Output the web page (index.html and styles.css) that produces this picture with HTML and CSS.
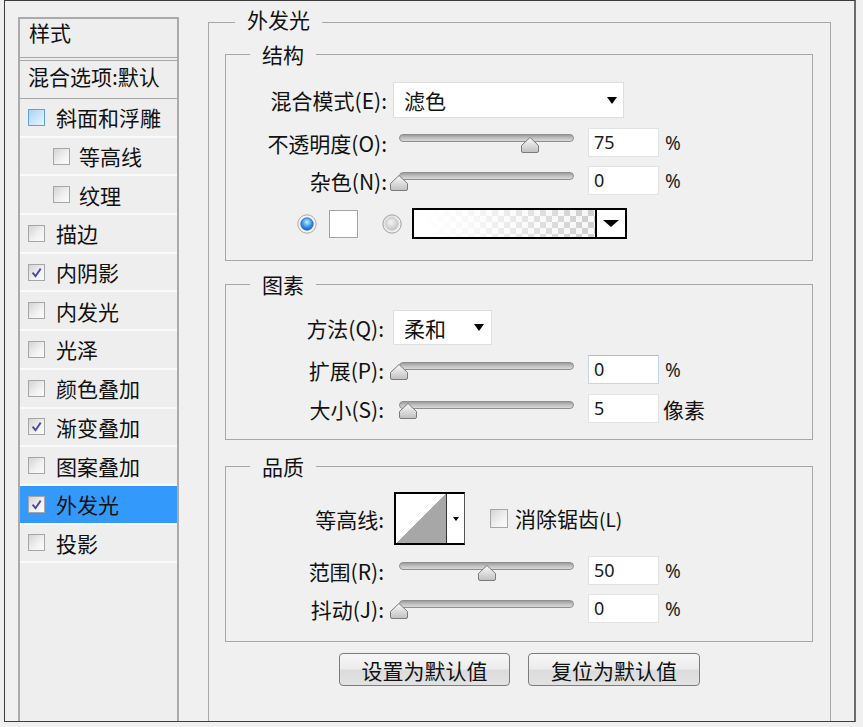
FILE: index.html
```html
<!DOCTYPE html>
<html lang="zh-CN">
<head>
<meta charset="utf-8">
<title>图层样式 - 外发光</title>
<link rel="stylesheet" href="styles.css">
</head>
<body>
<div class="frame">
  <div class="style-list">
    <div class="list-head">样式</div>
    <div class="list-blend">混合选项:默认</div>
    <div class="item"><span class="cb cb-hover"></span>斜面和浮雕</div>
    <div class="item sub"><span class="cb"></span>等高线</div>
    <div class="item sub"><span class="cb"></span>纹理</div>
    <div class="item"><span class="cb"></span>描边</div>
    <div class="item"><span class="cb"><svg viewBox="0 0 15 15" width="15" height="15"><path d="M3.6 7.6l2.9 3.6 5.2-7.6" fill="none" stroke="#4a4aa6" stroke-width="1.9"/></svg></span>内阴影</div>
    <div class="item"><span class="cb"></span>内发光</div>
    <div class="item"><span class="cb"></span>光泽</div>
    <div class="item"><span class="cb"></span>颜色叠加</div>
    <div class="item"><span class="cb"><svg viewBox="0 0 15 15" width="15" height="15"><path d="M3.6 7.6l2.9 3.6 5.2-7.6" fill="none" stroke="#4a4aa6" stroke-width="1.9"/></svg></span>渐变叠加</div>
    <div class="item"><span class="cb"></span>图案叠加</div>
    <div class="item active"><span class="cb"><svg viewBox="0 0 15 15" width="15" height="15"><path d="M3.6 7.6l2.9 3.6 5.2-7.6" fill="none" stroke="#4a4aa6" stroke-width="1.9"/></svg></span>外发光</div>
    <div class="item"><span class="cb"></span>投影</div>
  </div>

  <fieldset class="panel">
    <legend class="panel-title">外发光</legend>

    <fieldset class="group g-structure">
      <legend>结构</legend>
      <div class="row r-blend">
        <span class="label">混合模式(E):</span>
        <div class="select select-blend"><span>滤色</span><i class="caret"></i></div>
      </div>
      <div class="row r-opacity">
        <span class="label">不透明度(O):</span>
        <div class="slider"><div class="track"></div><svg class="thumb" style="left:75%" viewBox="0 0 20 17" width="20" height="17"><path d="M1.5 15V9.5L10 1.5l8.5 8V15q0 1.5-1.5 1.5H3Q1.5 16.5 1.5 15Z"/></svg></div>
        <div class="num">75</div><span class="unit">%</span>
      </div>
      <div class="row r-noise">
        <span class="label">杂色(N):</span>
        <div class="slider"><div class="track"></div><svg class="thumb" style="left:0%" viewBox="0 0 20 17" width="20" height="17"><path d="M1.5 15V9.5L10 1.5l8.5 8V15q0 1.5-1.5 1.5H3Q1.5 16.5 1.5 15Z"/></svg></div>
        <div class="num">0</div><span class="unit">%</span>
      </div>
      <div class="row r-color">
        <svg class="radio" viewBox="0 0 20 20" width="20" height="20"><circle cx="10" cy="10" r="9.2" fill="#f3f3f3" stroke="#a8a8a8"/><circle cx="10" cy="10" r="6.2" fill="url(#radioBlue)" stroke="#2766b0" stroke-width=".8"/></svg>
        <div class="swatch"></div>
        <svg class="radio radio-off" viewBox="0 0 20 20" width="20" height="20"><circle cx="10" cy="10" r="9.2" fill="url(#radioGray)" stroke="#a2a2a2"/><circle cx="10" cy="10" r="6.2" fill="url(#radioGrayIn)" stroke="#c4c4c4" stroke-width=".8"/></svg>
        <div class="gradient"><div class="grad-fill"></div><div class="grad-arrow"><i class="caret caret-big"></i></div></div>
      </div>
    </fieldset>

    <fieldset class="group g-elements">
      <legend>图素</legend>
      <div class="row r-method">
        <span class="label">方法(Q):</span>
        <div class="select select-method"><span>柔和</span><i class="caret"></i></div>
      </div>
      <div class="row r-spread">
        <span class="label">扩展(P):</span>
        <div class="slider"><div class="track"></div><svg class="thumb" style="left:0%" viewBox="0 0 20 17" width="20" height="17"><path d="M1.5 15V9.5L10 1.5l8.5 8V15q0 1.5-1.5 1.5H3Q1.5 16.5 1.5 15Z"/></svg></div>
        <div class="num num-focus">0</div><span class="unit">%</span>
      </div>
      <div class="row r-size">
        <span class="label">大小(S):</span>
        <div class="slider"><div class="track"></div><svg class="thumb" style="left:5%" viewBox="0 0 20 17" width="20" height="17"><path d="M1.5 15V9.5L10 1.5l8.5 8V15q0 1.5-1.5 1.5H3Q1.5 16.5 1.5 15Z"/></svg></div>
        <div class="num">5</div><span class="unit unit-px">像素</span>
      </div>
    </fieldset>

    <fieldset class="group g-quality">
      <legend>品质</legend>
      <div class="row r-contour">
        <span class="label">等高线:</span>
        <div class="contour"><div class="contour-preview"></div><div class="contour-arrow"><i class="caret caret-small"></i></div></div>
        <span class="cb cb-large"></span><span class="aa-label">消除锯齿<span class="key">(L)</span></span>
      </div>
      <div class="row r-range">
        <span class="label">范围(R):</span>
        <div class="slider"><div class="track"></div><svg class="thumb" style="left:50%" viewBox="0 0 20 17" width="20" height="17"><path d="M1.5 15V9.5L10 1.5l8.5 8V15q0 1.5-1.5 1.5H3Q1.5 16.5 1.5 15Z"/></svg></div>
        <div class="num">50</div><span class="unit">%</span>
      </div>
      <div class="row r-jitter">
        <span class="label">抖动(J):</span>
        <div class="slider"><div class="track"></div><svg class="thumb" style="left:0%" viewBox="0 0 20 17" width="20" height="17"><path d="M1.5 15V9.5L10 1.5l8.5 8V15q0 1.5-1.5 1.5H3Q1.5 16.5 1.5 15Z"/></svg></div>
        <div class="num">0</div><span class="unit">%</span>
      </div>
    </fieldset>

    <div class="buttons">
      <button class="btn btn-set">设置为默认值</button>
      <button class="btn btn-reset">复位为默认值</button>
    </div>
  </fieldset>
</div>

<svg class="defs" width="0" height="0" aria-hidden="true">
  <defs>
    <linearGradient id="thumbGrad" x1="0" y1="0" x2="0" y2="1">
      <stop offset="0" stop-color="#fbfbfb"/>
      <stop offset="1" stop-color="#c0c0c0"/>
    </linearGradient>
    <radialGradient id="radioBlue" cx="50%" cy="35%" r="65%">
      <stop offset="0" stop-color="#c8ecff"/>
      <stop offset=".55" stop-color="#3e9cf0"/>
      <stop offset="1" stop-color="#1b5aa8"/>
    </radialGradient>
    <linearGradient id="radioGray" x1="0" y1="0" x2="1" y2="1">
      <stop offset="0" stop-color="#dcdcdc"/>
      <stop offset="1" stop-color="#f7f7f7"/>
    </linearGradient>
    <radialGradient id="radioGrayIn" cx="40%" cy="35%" r="70%">
      <stop offset="0" stop-color="#f4f4f4"/>
      <stop offset="1" stop-color="#c2c2c2"/>
    </radialGradient>
  </defs>
</svg>
</body>
</html>
```

FILE: styles.css
```css
* {
  box-sizing: border-box;
}

body {
  margin: 0;
  background: #f0f0f0;
  font-family: "Noto Sans CJK SC", "Noto Sans", sans-serif;
  font-size: 21px;
  color: #111;
}

.frame {
  margin-left: 4px;
  width: 852px;
  height: 722px;
  border: 1px solid #3d3d3d;
  border-right: 2px solid #6b6b6b;
  background: #f0f0f0;
  display: flex;
  align-items: flex-start;
  overflow: hidden;
}

/* ---------- left style list ---------- */
.style-list {
  flex: none;
  margin: 16px 0 0 13px;
  width: 161px;
  height: 760px;
  border: 2px solid #ababab;
  border-bottom: none;
  background: #eeeeee;
}

.list-head {
  height: 39px;
  padding: 1px 0 0 9px;
  line-height: 24px;
  border-bottom: 1px solid #a6a6a6;
}

.list-blend {
  margin-top: 2px;
  height: 39px;
  padding: 3px 0 0 8px;
  line-height: 24px;
  border-top: 1px solid #a6a6a6;
  border-bottom: 1px solid #a6a6a6;
  white-space: nowrap;
}

.item {
  height: 38.7px;
  display: flex;
  align-items: center;
  line-height: 24px;
  border-bottom: 2px solid #fafafa;
  white-space: nowrap;
}

.item.active {
  background: #3399fb;
}

.cb {
  flex: none;
  width: 17px;
  height: 17px;
  border: 1px solid #a6a6a6;
  background: linear-gradient(135deg, #d4d4d4 0%, #f2f2f2 60%, #fbfbfb 100%);
  display: inline-flex;
  align-items: center;
  justify-content: center;
  margin: 0 11px 0 8px;
}

.item.sub .cb {
  margin-left: 33px;
  margin-right: 9px;
}

.cb-hover {
  border-color: #5ea2dc;
  background: linear-gradient(135deg, #a9d5f6 0%, #cfe8fb 60%, #e4f3fe 100%);
}

.cb svg {
  display: block;
}

/* ---------- main panel ---------- */
fieldset {
  margin: 0;
  padding: 0;
  min-width: 0;
  border: 1px solid #a7a7a7;
}

legend {
  padding: 0 12px;
  font-size: 21px;
  line-height: 24px;
  color: #111;
}

.panel {
  flex: none;
  margin: 6px 0 0 29px;
  width: 623px;
  height: 800px;
  padding: 0 16px;
}

.panel-title {
  margin-left: 10px;
  padding-bottom: 6px;
}

.group {
  width: 588px;
}

.group legend {
  margin-left: 24px;
}

.g-structure {
  margin-top: 5px;
  padding-bottom: 21px;
}

.g-elements {
  margin-top: 11px;
  padding-bottom: 16px;
}

.g-quality {
  margin-top: 14px;
  padding-bottom: 18px;
}

.row {
  display: flex;
  align-items: center;
}

.label {
  flex: none;
  width: 158px;
  text-align: right;
  line-height: 24px;
  white-space: nowrap;
  color: #111;
}

.g-structure .label {
  width: 161px;
}

/* row metrics */
.r-blend { margin-top: 16px; height: 36px; }
.r-opacity { margin-top: 10px; height: 29px; }
.r-noise { margin-top: 9px; height: 29px; }
.r-color { margin-top: 13px; height: 31px; padding-left: 71px; }
.r-method { margin-top: 14px; height: 35px; }
.r-spread { margin-top: 10px; height: 29px; }
.r-size { margin-top: 10px; height: 29px; }
.r-contour { margin-top: 14px; height: 53px; }
.r-range { margin-top: 11px; height: 29px; }
.r-jitter { margin-top: 9px; height: 29px; }

/* dropdowns */
.select {
  display: flex;
  align-items: center;
  justify-content: space-between;
  background: #fff;
  border: 1px solid #dedede;
  padding: 0 6px 0 10px;
  line-height: 24px;
}

.select-blend {
  margin-left: 6px;
  width: 231px;
  height: 36px;
}

.select-method {
  margin-left: 9px;
  width: 99px;
  height: 35px;
  padding-right: 7px;
}

.caret {
  width: 0;
  height: 0;
  border-left: 5px solid transparent;
  border-right: 5px solid transparent;
  border-top: 7px solid #000;
}

.caret-big {
  border-left-width: 8px;
  border-right-width: 8px;
  border-top-width: 7px;
}

.caret-small {
  border-left-width: 3px;
  border-right-width: 3px;
  border-top-width: 4px;
}

/* sliders */
.slider {
  position: relative;
  flex: none;
  width: 175px;
  height: 29px;
  margin-left: 15px;
}

.g-structure .slider {
  margin-left: 12px;
}

.track {
  margin-top: 6px;
  height: 8px;
  border-radius: 4px;
  border: 1px solid #8f8f8f;
  background: linear-gradient(#9c9c9c, #bdbdbd 45%, #dadada);
}

.g-elements .track {
  margin-top: 7px;
}

.thumb {
  position: absolute;
  top: 8px;
  margin-left: -10px;
  display: block;
}

.thumb path {
  fill: url(#thumbGrad);
  stroke: #7a7a7a;
  stroke-width: 1;
}

.num {
  flex: none;
  margin-left: 14px;
  width: 71px;
  height: 29px;
  background: #fff;
  border: 1px solid #e2e2e2;
  padding-left: 5px;
  font-family: "Noto Sans", "DejaVu Sans", sans-serif;
  font-size: 18px;
  line-height: 27px;
  color: #1a1a1a;
}

.num-focus {
  border-color: #c3d7ec;
  border-top-color: #9fbfe0;
}

.unit {
  margin-left: 6px;
  font-family: "Noto Sans", "DejaVu Sans", sans-serif;
  font-size: 19px;
  color: #222;
}

.unit-px {
  margin-left: 4px;
  font-family: "Noto Sans CJK SC", sans-serif;
  font-size: 21px;
  color: #111;
}

/* colour row */
.radio {
  flex: none;
  display: block;
}

.swatch {
  flex: none;
  margin-left: 12px;
  width: 29px;
  height: 28px;
  background: #fff;
  border: 1px solid #a3a3a3;
}

.radio-off {
  margin-left: 24px;
}

.gradient {
  flex: none;
  margin-left: 10px;
  width: 215px;
  height: 31px;
  border: 2px solid #000;
  display: flex;
  background: #fff;
}

.grad-fill {
  flex: 1;
  background:
    linear-gradient(to right, #fff 5%, rgba(255, 255, 255, 0.8) 35%, rgba(255, 255, 255, 0) 95%),
    repeating-conic-gradient(#d0d0d0 0 25%, #f7f7f7 0 50%) 0 0 / 12px 12px;
}

.grad-arrow {
  flex: none;
  width: 30px;
  border-left: 2px solid #000;
  background: #fff;
  display: flex;
  align-items: center;
  justify-content: center;
}

/* contour */
.contour {
  flex: none;
  margin-left: 10px;
  width: 71px;
  height: 53px;
  border: 2px solid #000;
  border-right: 1px solid #555;
  display: flex;
  background: #fff;
}

.contour-preview {
  flex: none;
  width: 51px;
  border-right: 1px solid #333;
  background: linear-gradient(to bottom right, #fff 50%, #a7a7a7 50%);
}

.contour-arrow {
  flex: 1;
  display: flex;
  align-items: center;
  justify-content: center;
}

.cb-large {
  width: 18px;
  height: 19px;
  margin: 0 7px 0 25px;
}

.aa-label {
  line-height: 24px;
  white-space: nowrap;
}

.key {
  font-size: 19px;
}

/* buttons */
.buttons {
  margin-top: 11px;
  display: flex;
  justify-content: center;
  gap: 18px;
}

.btn {
  height: 33px;
  border: 1px solid #7c7c7c;
  border-radius: 4px;
  background: linear-gradient(#f7f7f7, #ececec 48%, #dcdcdc 52%, #e2e2e2);
  font-family: "Noto Sans CJK SC", sans-serif;
  font-size: 21px;
  line-height: 24px;
  color: #111;
  padding: 0;
}

.btn-set {
  width: 171px;
}

.btn-reset {
  width: 172px;
}

.defs {
  display: block;
  width: 0;
  height: 0;
}
```
